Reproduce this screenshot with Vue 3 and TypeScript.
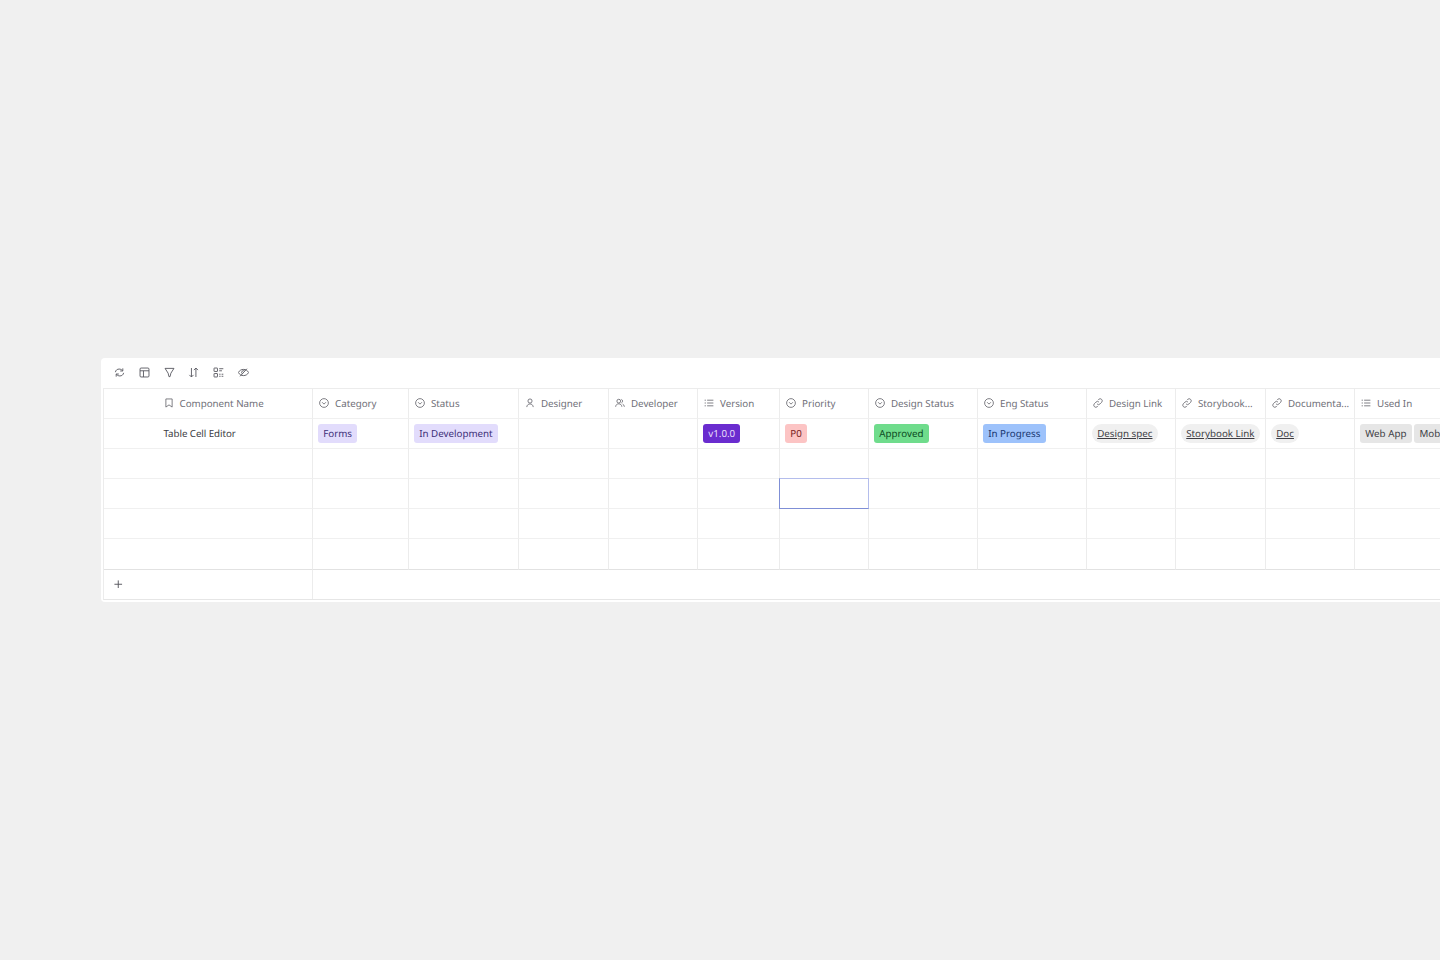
<script setup lang="ts">
interface Column {
  name: string
  icon: 'bookmark' | 'select' | 'person' | 'people' | 'list' | 'link'
}

interface Tag {
  text: string
  kind: string
}

const columns: Column[] = [
  { name: 'Component Name', icon: 'bookmark' },
  { name: 'Category', icon: 'select' },
  { name: 'Status', icon: 'select' },
  { name: 'Designer', icon: 'person' },
  { name: 'Developer', icon: 'people' },
  { name: 'Version', icon: 'list' },
  { name: 'Priority', icon: 'select' },
  { name: 'Design Status', icon: 'select' },
  { name: 'Eng Status', icon: 'select' },
  { name: 'Design Link', icon: 'link' },
  { name: 'Storybook...', icon: 'link' },
  { name: 'Documenta...', icon: 'link' },
  { name: 'Used In', icon: 'list' }
]

const firstRow: Tag[][] = [
  [],
  [{ text: 'Forms', kind: 'violet' }],
  [{ text: 'In Development', kind: 'violet' }],
  [],
  [],
  [{ text: 'v1.0.0', kind: 'purple' }],
  [{ text: 'P0', kind: 'red' }],
  [{ text: 'Approved', kind: 'green' }],
  [{ text: 'In Progress', kind: 'blue' }],
  [{ text: 'Design spec', kind: 'link' }],
  [{ text: 'Storybook Link', kind: 'link' }],
  [{ text: 'Doc', kind: 'link' }],
  [{ text: 'Web App', kind: 'grey' }, { text: 'Mobile', kind: 'grey' }]
]

const emptyRows = [1, 2, 3, 4]
</script>

<template>
  <div class="page">
    <div class="card">
      <div class="toolbar">
        <svg class="tool" viewBox="0 0 16 16">
          <path d="M2 7.500C2.500 4.500 4.800 3 7.500 3c2 0 3.500.8 5 2.500M12.800 2v3.800H9M14 8.500c-.5 3-2.800 4.500-5.500 4.500-2 0-3.500-.8-5-2.500M3.200 14v-3.800H7" />
        </svg>
        <svg class="tool" viewBox="0 0 16 16">
          <rect x="1.500" y="1.500" width="13" height="13" rx="1.500" />
          <path d="M1.500 5.500h13M6.500 5.500v9" />
        </svg>
        <svg class="tool" viewBox="0 0 16 16">
          <path d="M1.500 2h13L10 9 8.800 14 7.200 14 6 9Z" />
        </svg>
        <svg class="tool" viewBox="0 0 16 16">
          <path d="M5 1.500v13M2 11.500l3 3 3-3M11.500 14.500v-13M8.500 4.500l3-3 3 3" />
        </svg>
        <svg class="tool" viewBox="0 0 16 16">
          <rect x="1.500" y="1.500" width="5" height="5" rx="0.500" />
          <rect x="1.500" y="9.500" width="5" height="5" rx="0.500" />
          <path d="M9 2.500h6M9 5.500h4M9 10.500h2M12.500 10.500h2.500M9 13.500h2M12.500 13.500h2.500" />
        </svg>
        <svg class="tool" viewBox="0 0 16 16">
          <path d="M.5 8c1.700-3 4.300-4.500 7.500-4.500s5.800 1.500 7.500 4.500c-1.700 3-4.300 4.500-7.500 4.500S2.200 11 .5 8Z" />
          <path d="M3 13.500 13 2.500M5.800 9.500a2.700 2.700 0 0 1 3.700-3.800" />
        </svg>
      </div>

      <div class="sheet">
        <div class="row head">
          <div
            v-for="(col, i) in columns"
            :key="col.name"
            class="cell"
            :class="{ first: i === 0 }"
          >
            <svg class="col-icon" viewBox="0 0 16 16">
              <path v-if="col.icon === 'bookmark'" d="M3 1.500h10v13L8 11l-5 3.500Z" />
              <template v-else-if="col.icon === 'select'">
                <circle cx="8" cy="8" r="7" />
                <path d="M5 6.800 8 9.800 11 6.800" />
              </template>
              <template v-else-if="col.icon === 'person'">
                <circle cx="8" cy="4.800" r="3.300" />
                <path d="M2.800 14.500c.4-3.300 2.500-5 5.200-5s4.800 1.700 5.200 5" />
              </template>
              <template v-else-if="col.icon === 'people'">
                <circle cx="6" cy="5" r="3" />
                <path d="M1 14c.3-3 2.200-4.700 5-4.700s4.700 1.700 5 4.700M10.200 2.200a3 3 0 0 1 0 5.600M12.200 9.800c1.700.7 2.600 2.200 2.800 4.200" />
              </template>
              <path v-else-if="col.icon === 'list'" d="M1 3.500h2M1 8h2M1 12.500h2M5 3.500h10M5 8h10M5 12.500h10" />
              <path
                v-else
                d="M6.500 9.500a3.300 3.300 0 0 0 4.700 0l2.600-2.600a3.300 3.300 0 0 0-4.700-4.700L8 3.300M9.500 6.500a3.300 3.300 0 0 0-4.700 0L2.200 9.100a3.300 3.300 0 0 0 4.700 4.700L8 12.700"
              />
            </svg>
            <span class="col-name">{{ col.name }}</span>
          </div>
        </div>

        <div class="row">
          <div class="cell first"><span class="title">Table Cell Editor</span></div>
          <template v-for="(tags, i) in firstRow" :key="i">
            <div v-if="i > 0" class="cell tags">
              <span v-for="tag in tags" :key="tag.text" class="tag" :class="tag.kind">{{ tag.text }}</span>
            </div>
          </template>
        </div>

        <div v-for="r in emptyRows" :key="r" class="row">
          <div
            v-for="(col, i) in columns"
            :key="col.name"
            class="cell"
            :class="{ first: i === 0, selected: r === 2 && col.name === 'Priority' }"
          />
        </div>

        <div class="row add-row">
          <div class="cell first add">
            <svg class="plus" viewBox="0 0 10 10"><path d="M5 .5v9M.5 5h9" /></svg>
          </div>
          <div class="add-rest" />
        </div>
      </div>
    </div>
  </div>
</template>

<style scoped>
.page {
  box-sizing: border-box;
  width: 1440px;
  height: 960px;
  padding: 358px 0 0 101px;
  overflow: hidden;
  background: #f0f0f0;
  font-family: "Noto Sans", "Open Sans", sans-serif;
  text-rendering: geometricPrecision;
}

.card {
  box-sizing: border-box;
  width: 1339px;
  height: 244px;
  padding-left: 2px;
  overflow: hidden;
  background: #fff;
  border-radius: 4px 0 0 4px;
}

.toolbar {
  box-sizing: border-box;
  display: flex;
  align-items: center;
  gap: 13.800px;
  height: 30px;
  padding: 0 0 1px 11px;
}

.tool {
  width: 11px;
  height: 11px;
  flex: none;
  fill: none;
  stroke: #55555d;
  stroke-width: 1.300;
}

.sheet {
  width: 1400px;
  border-top: 1px solid #ececec;
  border-left: 1px solid #ececec;
  border-bottom: 1px solid #e6e6e6;
}

.row {
  display: grid;
  grid-template-columns: 209px 96px 110px 90px 89px 82px 89px 109px 109px 89px 90px 89px 120px;
  height: 30.100px;
}

.cell {
  box-sizing: border-box;
  display: flex;
  align-items: center;
  min-width: 0;
  padding: 0 5px 0 5.500px;
  border-right: 1px solid #ececec;
  border-bottom: 1px solid #f0f0f0;
  font-size: 9.750px;
  white-space: nowrap;
}

.first {
  padding-left: 59.500px;
}

.head .cell {
  gap: 6.500px;
  padding-bottom: 1px;
}

.head .first {
  padding-left: 60px;
  gap: 5.500px;
}

.row:nth-last-child(2) .cell {
  border-bottom-color: #e2e2e2;
}

.col-icon {
  width: 10px;
  height: 10px;
  flex: none;
  fill: none;
  stroke: #62626a;
  stroke-width: 1.300;
}

.col-name {
  color: #6f6f78;
}

.title {
  position: relative;
  top: -0.500px;
  color: #3d3d44;
  letter-spacing: -0.060px;
}

.tags {
  gap: 2.500px;
  padding-left: 5px;
  overflow: hidden;
}

.tag {
  flex: none;
  padding: 3px 5.250px;
  border-radius: 3px;
  line-height: 13px;
}

.violet {
  background: #e2dcfc;
  color: #3d2f78;
}

.purple {
  background: #6a2ccf;
  color: #e6dcfa;
}

.red {
  background: #fcc4c4;
  color: #7a1f1f;
}

.green {
  background: #6fdc8c;
  color: #0c4a1f;
}

.blue {
  background: #9dc2fb;
  color: #17356e;
}

.link {
  border-radius: 10px;
  background: #f0f0f0;
  color: #3d3d44;
  text-decoration: underline;
}

.grey {
  background: #e6e6e6;
  color: #3d3d44;
}

.selected {
  margin: -1px 0 0 -1px;
  border-top: 1px solid #b4bdec;
  border-right: 1px solid #b4bdec;
  border-bottom: 1px solid #7f8fd6;
  border-left: 1px solid #7f8fd6;
}

.add-row {
  display: flex;
  height: 29.300px;
}

.add {
  width: 209px;
  flex: none;
  padding-left: 10px;
  border-bottom: none;
}

.add-rest {
  flex: 1;
}

.plus {
  width: 8.500px;
  height: 8.500px;
  fill: none;
  stroke: #55555c;
  stroke-width: 1.100;
}
</style>

<style>
html,
body {
  margin: 0;
  background: #f0f0f0;
}
</style>
